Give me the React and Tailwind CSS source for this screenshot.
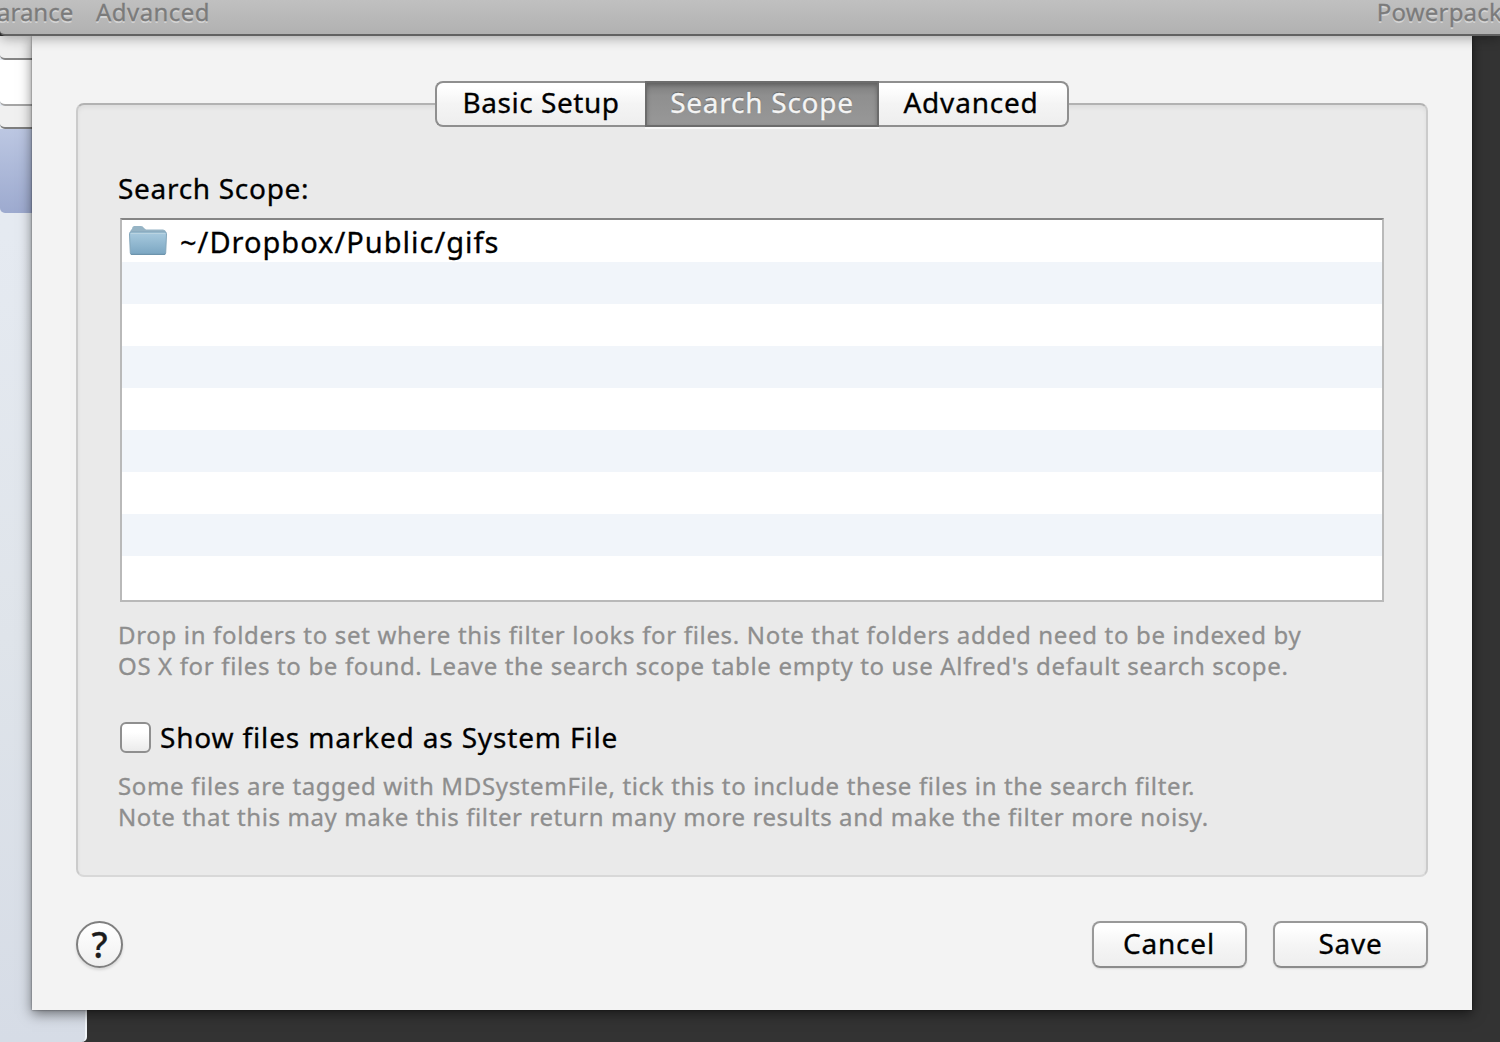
import React from "react";

const tabs = [
  { label: "Basic Setup", cls: "w-[210px] rounded-l-[8px] border-2 border-r-0 tracking-[0.55px] border-[#8f8f8f] bg-linear-to-b from-white from-10% via-[#f4f4f4] via-50% to-[#eeeeee] text-black" },
  { label: "Search Scope", cls: "w-[234px] border-x-2 border-y-2 tracking-[0.75px] border-[#6c6c6c] bg-linear-to-b from-[#7e7e7e] via-[#8f8f8f] via-30% to-[#989898] text-[#f4f4f4] shadow-[inset_0_2px_4px_rgba(0,0,0,0.25),0_2px_0_#f8f8f8] [text-shadow:0_-1px_1px_rgba(0,0,0,0.35)]" },
  { label: "Advanced", cls: "w-[190px] rounded-r-[8px] border-2 border-l-0 tracking-[0.8px] border-[#8f8f8f] bg-linear-to-b from-white from-10% via-[#f4f4f4] via-50% to-[#eeeeee] text-black pr-1" },
];

function Tabs() {
  return (
    <div className="-mt-6 flex h-[46px] justify-center">
      {tabs.map((t) => (
        <button key={t.label} className={"flex items-center justify-center whitespace-nowrap pb-1 leading-none " + t.cls}>
          {t.label}
        </button>
      ))}
    </div>
  );
}

function Folder() {
  return (
    <svg className="ml-[7px] h-[32px] w-[38px]" viewBox="0 0 38 32">
      <defs>
        <linearGradient id="front" x1="0" y1="0" x2="0" y2="1">
          <stop offset="0" stopColor="#a9cbdf" />
          <stop offset="1" stopColor="#7ba6c2" />
        </linearGradient>
      </defs>
      <path d="M1 9 Q1 5 3 4 Q3 1.500 5 1 H12 Q14 1 15 3 L17 4.500 H34 Q36.500 4.500 37 7 V11 H1Z" fill="#96b4c5" />
      <path d="M.5 8.500 Q.5 7 2 7 H36 Q37.500 7 37.500 8.500 L36.700 28 Q36.700 29.500 35.200 29.500 H2.800 Q1.300 29.500 1.300 28Z" fill="url(#front)" stroke="#82a5ba" strokeWidth="1" />
      <path d="M2 8.500H36" stroke="#b9d3e1" strokeWidth="1" />
      <path d="M2 29.300H36" stroke="#6890a9" strokeWidth="1" />
    </svg>
  );
}

function FolderList() {
  return (
    <div className="mt-[12px] flex h-[384px] flex-col overflow-hidden border-2 border-[#b9b9b9] border-t-[#858585] bg-white">
      <div className="flex h-[42px] shrink-0 items-center">
        <Folder />
        <span className="ml-[13px] pt-0.5 text-[29px] leading-[36px] tracking-[1px]">~/Dropbox/Public/gifs</span>
      </div>
      {[1, 2, 3, 4, 5, 6, 7, 8].map((i) => (
        <div key={i} className="h-[42px] shrink-0 odd:bg-white even:bg-[#f1f5fa]" />
      ))}
    </div>
  );
}

function PushButton({ children, cls }) {
  return (
    <button className={"flex h-[47px] w-[155px] items-center justify-center rounded-[8px] border-2 border-[#999999] border-b-[#8b8b8b] bg-linear-to-b from-white from-10% via-[#f5f5f5] via-50% to-[#eeeeee] pb-1 leading-none shadow-[0_1px_2px_rgba(0,0,0,0.1)] " + cls}>
      {children}
    </button>
  );
}

function BackWindow() {
  return (
    <div className="absolute left-0 top-9 flex h-[1006px] w-[87px] flex-col overflow-hidden rounded-br-[5px] border-r-2 border-[#f0f4f8] bg-linear-to-b from-[#e5eaf1] from-20% via-[#dfe4ea] via-60% to-[#d6dce6]">
      <div className="h-6 shrink-0 rounded-bl-[5px] border-b-2 border-[#858585] bg-[#efefef]" />
      <div className="h-[46px] shrink-0 rounded-bl-[5px] border-b-2 border-[#a5a5a5] bg-white" />
      <div className="h-[23px] shrink-0 rounded-bl-[5px] border-b-2 border-[#7e7e7e] bg-[#f0f0f0]" />
      <div className="h-[84px] shrink-0 rounded-bl-[5px] bg-linear-to-b from-[#bcc7e2] to-[#9daacf]" />
    </div>
  );
}

export default function App() {
  return (
    <div className="relative h-[1042px] w-[1500px] overflow-hidden bg-[#333333] font-['Noto_Sans',sans-serif] text-[28px] text-black [-webkit-text-stroke:0.3px]">
      <BackWindow />
      <header className="relative z-20 flex h-9 justify-between rounded-bl-[5px] border-b-2 border-[#626262] bg-linear-to-b from-[#c0c0c0] to-[#b1b1b1] text-[24px] leading-[24px] text-[#7b7b7b] shadow-[0_3px_12px_rgba(0,0,0,0.3)] [text-shadow:0_1.5px_0_#d4d4d4]">
        <div className="flex">
          <span className="-ml-[3px] w-[99px]">arance</span>
          <span className="tracking-[0.45px]">Advanced</span>
        </div>
        <span className="-mr-[2px] tracking-[0.2px]">Powerpack</span>
      </header>

      <main className="relative z-10 ml-8 h-[974px] w-[1440px] bg-[#f3f3f3] px-[44px] pt-[67px] shadow-[0_4px_12px_rgba(0,0,0,0.5),0_0_2px_rgba(0,0,0,0.5)]">
        <section className="h-[774px] rounded-[8px] border-2 border-[#cbcbcb] border-b-[#d8d8d8] border-t-[#b2b2b2] bg-[#eaeaea] px-[42px] shadow-[inset_0_3px_4px_rgba(0,0,0,0.05)]">
          <Tabs />
          <h2 className="mt-[43px] -ml-0.5 leading-[36px] tracking-[0.7px]">Search Scope:</h2>
          <FolderList />
          <p className="-ml-0.5 mt-[17px] whitespace-nowrap text-[24px] leading-[31px] text-[#8e8e8e]">
            <span className="block tracking-[0.67px]">Drop in folders to set where this filter looks for files. Note that folders added need to be indexed by</span>
            <span className="block tracking-[0.65px]">OS X for files to be found. Leave the search scope table empty to use Alfred's default search scope.</span>
          </p>
          <label className="mt-[38px] flex h-9 items-center">
            <span className="h-[31px] w-[31px] rounded-[6px] border-2 border-[#8f8f8f] bg-linear-to-b from-white from-30% to-[#ebebeb]" />
            <span className="ml-[9px] leading-[36px] tracking-[0.84px]">Show files marked as System File</span>
          </label>
          <p className="-ml-0.5 mt-[15px] whitespace-nowrap text-[24px] leading-[31px] text-[#8e8e8e]">
            <span className="block tracking-[0.66px]">Some files are tagged with MDSystemFile, tick this to include these files in the search filter.</span>
            <span className="block tracking-[0.6px]">Note that this may make this filter return many more results and make the filter more noisy.</span>
          </p>
        </section>

        <footer className="mt-[44px] flex items-center">
          <button className="flex size-[47px] items-center justify-center rounded-full border-2 border-[#7f7f7f] bg-linear-to-b from-white via-[#f8f8f8] via-50% to-[#efefef] text-[36px] font-medium leading-none text-[#1c1c1c] shadow-[0_2px_3px_rgba(0,0,0,0.12)]">
            ?
          </button>
          <div className="ml-auto flex gap-[26px]">
            <PushButton cls="pr-px tracking-[0.8px]">Cancel</PushButton>
            <PushButton cls="tracking-[0.7px]">Save</PushButton>
          </div>
        </footer>
      </main>
    </div>
  );
}
